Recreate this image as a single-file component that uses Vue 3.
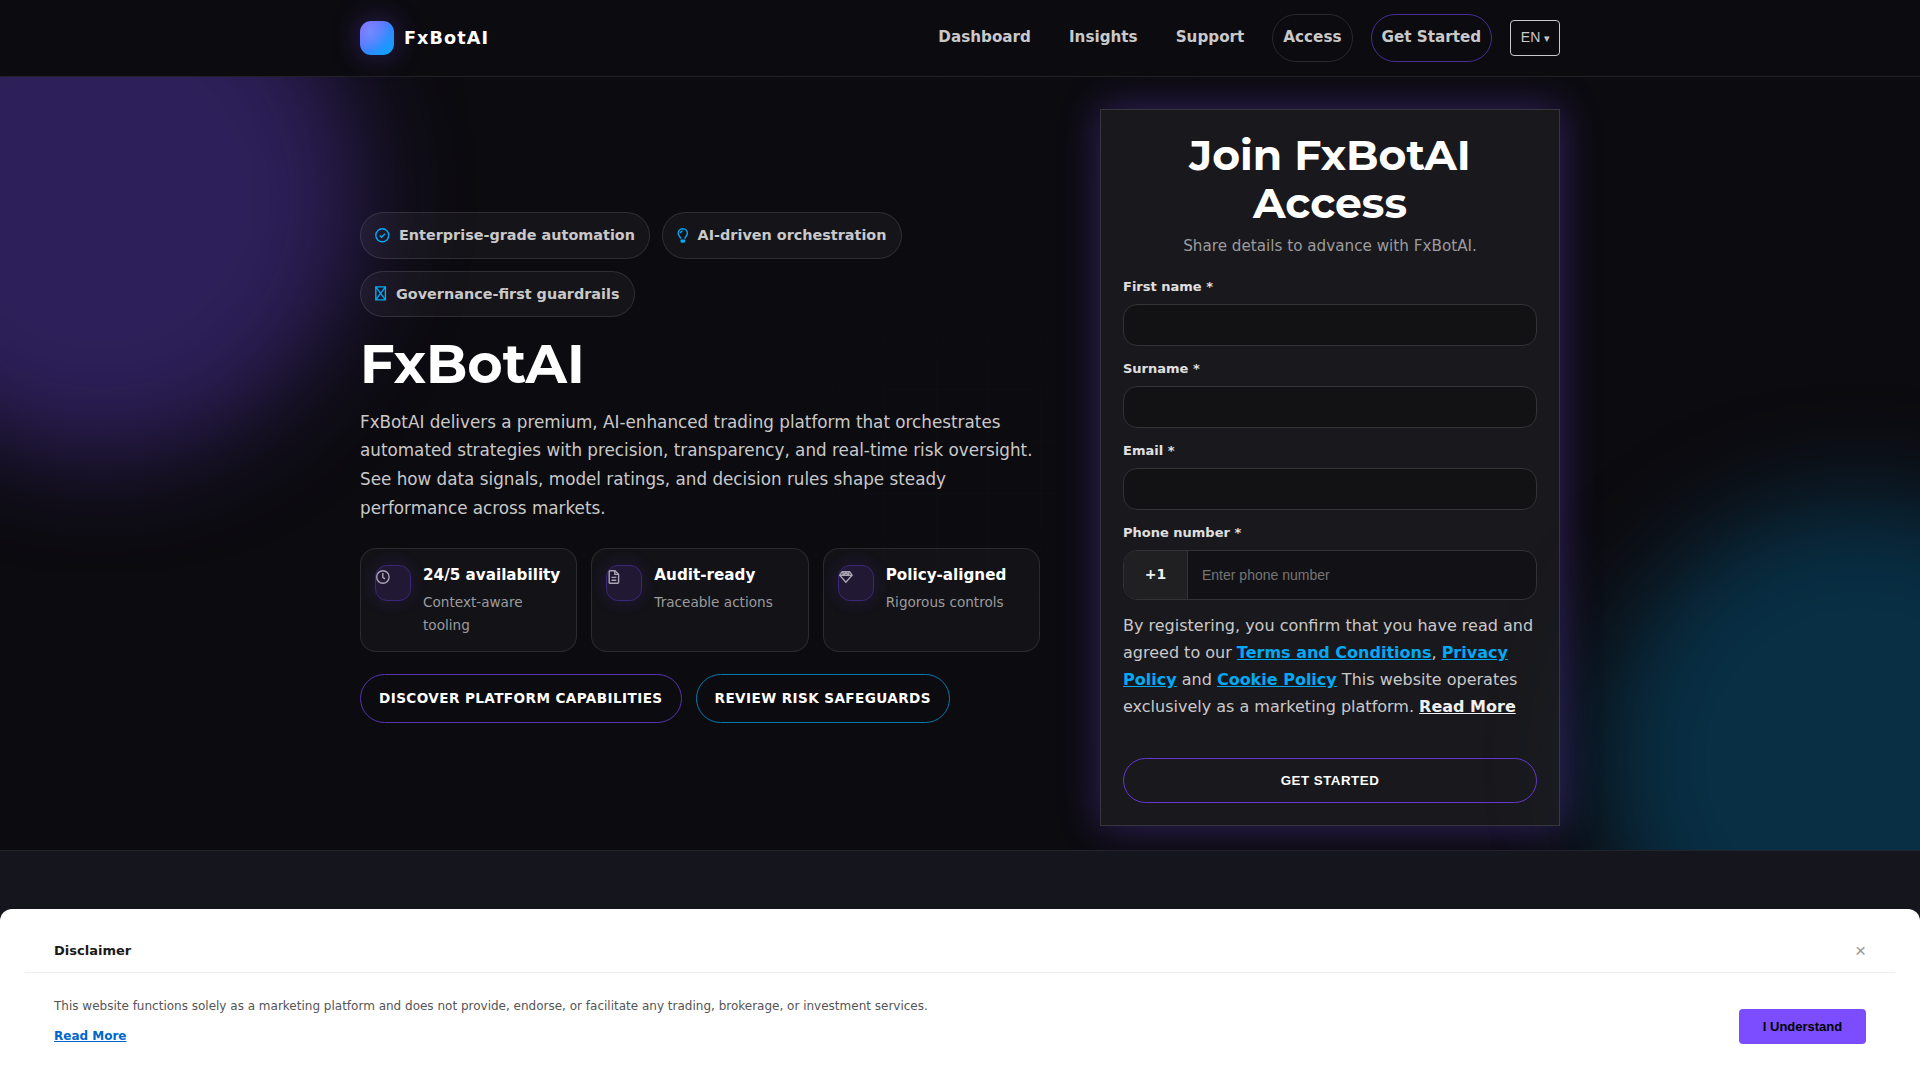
<script setup>
import { ref } from 'vue';

const navLinks = ['Dashboard', 'Insights', 'Support'];

const badges = [
  { icon: 'check', text: 'Enterprise-grade automation' },
  { icon: 'bulb', text: 'AI-driven orchestration' },
  { icon: 'box', text: 'Governance-first guardrails' },
];

const cards = [
  { icon: 'clock', title: '24/5 availability', text: 'Context-aware tooling' },
  { icon: 'file', title: 'Audit-ready', text: 'Traceable actions' },
  { icon: 'gem', title: 'Policy-aligned', text: 'Rigorous controls' },
];

const fields = ref([
  { id: 'first', label: 'First name *', value: '' },
  { id: 'last', label: 'Surname *', value: '' },
  { id: 'email', label: 'Email *', value: '' },
]);
const phone = ref('');
const showDisclaimer = ref(true);
</script>

<template>
  <div class="page">
    <header class="header">
      <div class="container header-row">
        <a class="brand"><span class="logo"></span><span>FxBotAI</span></a>
        <nav class="nav">
          <a v-for="link in navLinks" :key="link" class="nav-link">{{ link }}</a>
          <a class="nav-link outlined">Access</a>
          <a class="nav-link outlined primary">Get Started</a>
          <button class="lang">EN <span class="caret">▾</span></button>
        </nav>
      </div>
    </header>

    <section class="hero">
      <div class="blob purple"></div>
      <div class="blob teal"></div>
      <div class="grid-lines"></div>

      <div class="container hero-row">
        <div class="intro">
          <div class="badges">
            <span v-for="badge in badges" :key="badge.text" class="badge">
              <svg v-if="badge.icon === 'check'" width="15" height="15" viewBox="0 0 15 15">
                <circle cx="7.3" cy="7.3" r="6.5" />
                <path d="M4.7 7.4l1.9 1.9 3.4-3.6" />
              </svg>
              <svg v-else-if="badge.icon === 'bulb'" width="11.6" height="15" viewBox="0 0 11.6 15">
                <path d="M3.7 10.6C3.5 8.8 1.2 7.8 1.2 5.2a4.6 4.5 0 0 1 9.2 0c0 2.6-2.3 3.6-2.5 5.4" />
                <path d="M3.5 5.1a2.2 2.2 0 0 1 2.2-2" />
                <path class="solid" d="M3.5 11.4h4.6v1.8a1.6 1.6 0 0 1-1.6 1.6H5.1a1.6 1.6 0 0 1-1.6-1.6z" />
              </svg>
              <svg v-else width="12" height="15" viewBox="0 0 12 15">
                <path d="M.8.9h9.6v13H.8zM.8.9l9.6 13M10.4.9L.8 13.9" />
              </svg>
              {{ badge.text }}
            </span>
          </div>

          <h1>FxBotAI</h1>
          <p class="lead">
            FxBotAI delivers a premium, AI-enhanced trading platform that orchestrates automated
            strategies with precision, transparency, and real-time risk oversight. See how data
            signals, model ratings, and decision rules shape steady performance across markets.
          </p>

          <div class="cards">
            <div v-for="card in cards" :key="card.title" class="card">
              <span class="card-icon">
                <svg v-if="card.icon === 'clock'" width="14" height="14" viewBox="0 0 14 14">
                  <circle cx="6.9" cy="7" r="6.2" />
                  <path d="M6.8 3v4.3L9 8.8" />
                </svg>
                <svg v-else-if="card.icon === 'file'" width="14" height="14" viewBox="0 0 14 14">
                  <path d="M3.2.7h4.8l3.6 3.5v8.1a1 1 0 0 1-1 1H3.2a1 1 0 0 1-1-1V1.7a1 1 0 0 1 1-1z" />
                  <path d="M7.8.9v3.5h3.6M4.5 7.4h4.8M4.5 10.3h4.8" />
                </svg>
                <svg v-else width="14" height="14" viewBox="0 0 14 14">
                  <path d="M3.2 1.7h7.4l2.5 3.5-6.2 7L.7 5.2z" />
                  <path d="M.8 5.3h12.2M3.6 2l1.1 3.1L6.9 2l2.2 3.1L10.2 2" />
                </svg>
              </span>
              <div>
                <div class="card-title">{{ card.title }}</div>
                <div class="card-text">{{ card.text }}</div>
              </div>
            </div>
          </div>

          <div class="actions">
            <a class="action">Discover platform capabilities</a>
            <a class="action blue">Review risk safeguards</a>
          </div>
        </div>

        <form class="form" @submit.prevent>
          <h2>Join FxBotAI Access</h2>
          <p class="form-sub">Share details to advance with FxBotAI.</p>

          <div v-for="field in fields" :key="field.id" class="field">
            <label :for="field.id">{{ field.label }}</label>
            <input :id="field.id" v-model="field.value" class="input" type="text" />
          </div>
          <div class="field">
            <label for="phone">Phone number *</label>
            <div class="phone">
              <span class="prefix">+1</span>
              <input id="phone" v-model="phone" type="tel" placeholder="Enter phone number" />
            </div>
          </div>

          <p class="terms">
            By registering, you confirm that you have read and agreed to our
            <a>Terms and Conditions</a>, <a>Privacy Policy</a> and <a>Cookie Policy</a>
            This website operates exclusively as a marketing platform.
            <a class="more">Read More</a>
          </p>
          <button class="submit">GET STARTED</button>
        </form>
      </div>
    </section>

    <section class="next"></section>

    <div v-if="showDisclaimer" class="disclaimer">
      <div class="disclaimer-head">
        <span>Disclaimer</span>
        <button class="close" @click="showDisclaimer = false">×</button>
      </div>
      <div class="disclaimer-body">
        <div>
          <p>This website functions solely as a marketing platform and does not provide, endorse, or facilitate any trading, brokerage, or investment services.</p>
          <a>Read More</a>
        </div>
        <button class="understand" @click="showDisclaimer = false">I Understand</button>
      </div>
    </div>
  </div>
</template>

<style>
body {
  background: #0c0b10;
}
</style>

<style scoped>
* {
  box-sizing: border-box;
}

.page {
  position: relative;
  height: 1080px;
  overflow: hidden;
  display: flex;
  flex-direction: column;
  background: #0c0b10;
  color: #c9c9c9;
  font-family: "DejaVu Sans", sans-serif;
  font-size: 16px;
  line-height: 1.7;
}

p, h1, h2 {
  margin: 0;
}

.container {
  width: 1200px;
  margin: 0 auto;
}

/* header */
.header {
  position: relative;
  z-index: 2;
  height: 77px;
  flex: none;
  background: #0c0b10;
  border-bottom: 1px solid #222126;
}
.header-row {
  height: 76px;
  display: flex;
  align-items: center;
  justify-content: space-between;
}
.brand {
  display: flex;
  align-items: center;
  gap: 10px;
  color: #fff;
  font-size: 17.6px;
  font-weight: 700;
  letter-spacing: 1.1px;
}
.brand span:last-child {
  padding-top: 1px;
}
.logo {
  width: 34px;
  height: 34px;
  border-radius: 11px;
  background:
    radial-gradient(circle at 30% 30%, rgba(124, 145, 255, 0.75), transparent 60%),
    linear-gradient(135deg, #8f5cff, #2f8aff 60%, #06a8ff);
  box-shadow: 0 0 28px rgba(124, 77, 255, 0.35);
}
.nav {
  display: flex;
  align-items: center;
  gap: 18px;
}
.nav-link {
  padding: 10px;
  font-size: 15.2px;
  font-weight: 700;
}
.outlined {
  border: 1px solid #29282d;
  border-radius: 24px;
}
.primary {
  border-color: #472d94;
}
.lang {
  width: 50px;
  height: 36px;
  margin-left: -0.2px;
  padding: 0 0 2px 1px;
  background: none;
  border: 1px solid #c9c9c9;
  border-radius: 4px;
  color: #c9c9c9;
  font: 14px "Liberation Sans", sans-serif;
}
.caret {
  font-size: 10.5px;
}

/* hero */
.hero {
  position: relative;
  height: 773px;
  flex: none;
  overflow: hidden;
}
.blob {
  position: absolute;
  width: 520px;
  height: 520px;
  border-radius: 50%;
  filter: blur(50px);
}
.purple {
  left: -160px;
  top: -140px;
  background: #2d1f59;
}
.teal {
  right: -200px;
  bottom: -170px;
  background: #082f44;
}
.grid-lines {
  position: absolute;
  inset: 0;
  background-image:
    linear-gradient(rgba(255, 255, 255, 0.012) 1px, transparent 1px),
    linear-gradient(90deg, rgba(255, 255, 255, 0.012) 1px, transparent 1px);
  background-size: 52px 52px;
  mask-image: radial-gradient(circle at 50% 50%, #000 0%, transparent 60%);
}
.hero-row {
  position: relative;
  height: 100%;
  padding-top: 32px;
  display: flex;
  justify-content: space-between;
  align-items: flex-start;
}
.intro {
  width: 680px;
  padding-top: 103px;
}
.badges {
  display: flex;
  flex-wrap: wrap;
  gap: 12px;
}
.badge {
  height: 46.5px;
  padding: 0 14px;
  display: flex;
  align-items: center;
  gap: 9px;
  border: 1px solid rgba(255, 255, 255, 0.11);
  border-radius: 24px;
  background: rgba(255, 255, 255, 0.04);
  font-size: 14.4px;
  font-weight: 700;
}
svg {
  fill: none;
  stroke: currentColor;
  stroke-width: 1.4;
}
.badge svg {
  color: #03a9f4;
}
.badge .solid {
  fill: currentColor;
  stroke: none;
}
h1, h2 {
  color: #fff;
  font-family: Montserrat, "Inter", sans-serif;
  font-weight: 700;
  line-height: 1.1;
}
h1 {
  margin-top: 18px;
  font-size: 54.1px;
}
.lead {
  margin-top: 13px;
  font-size: 16.8px;
  line-height: 28.7px;
}
.cards {
  margin-top: 26px;
  display: grid;
  grid-template-columns: repeat(3, 1fr);
  gap: 14px;
}
.card {
  height: 104px;
  padding: 14px;
  display: flex;
  gap: 12px;
  border: 1px solid rgba(255, 255, 255, 0.1);
  border-radius: 16px;
  background: rgba(255, 255, 255, 0.03);
}
.card-icon {
  width: 36px;
  height: 36px;
  margin-top: 2px;
  flex: none;
  display: flex;
  padding-top: 4px;
  border: 1px solid #3b2778;
  border-radius: 12px;
  background: #211834;
  box-shadow: 0 0 18px rgba(124, 77, 255, 0.16);
  color: #aaa6b2;
}
.card-title {
  color: #fff;
  font-size: 15.2px;
  font-weight: 700;
}
.card-text {
  margin-top: 2px;
  color: #9c9c9e;
  font-size: 13.6px;
}
.actions {
  margin-top: 22px;
  display: flex;
  gap: 14px;
}
.action {
  height: 49px;
  padding: 0 18px;
  display: flex;
  align-items: center;
  border: 1px solid #5634b0;
  border-radius: 25px;
  color: #fff;
  font-size: 13.6px;
  font-weight: 700;
  letter-spacing: 0.4px;
  text-transform: uppercase;
}
.blue {
  border-color: #0779af;
}

/* form */
.form {
  width: 460px;
  height: 717px;
  padding: 21px 22px 22px;
  display: flex;
  flex-direction: column;
  border: 1px solid rgba(255, 255, 255, 0.13);
  background: linear-gradient(rgba(255, 255, 255, 0.055), rgba(255, 255, 255, 0.055)), rgba(12, 11, 16, 0.5);
  box-shadow: 0 0 36px rgba(124, 77, 255, 0.35);
}
h2 {
  padding: 0 40px;
  font-size: 42.5px;
  line-height: 48px;
  text-align: center;
}
.form-sub {
  margin-top: 7px;
  margin-bottom: 16px;
  color: #9c9c9e;
  font-size: 15.2px;
  text-align: center;
}
.field {
  margin-bottom: 12px;
}
.field label {
  display: block;
  height: 28px;
  line-height: 22px;
  color: #e0e0e0;
  font-size: 13px;
  font-weight: 700;
}
.field .input {
  display: block;
  width: 100%;
  height: 42px;
  border: 1px solid #333336;
  border-radius: 14px;
  background: #121215;
}
.phone {
  height: 50px;
  display: flex;
  overflow: hidden;
  border: 1px solid #333336;
  border-radius: 14px;
  background: #121116;
}
.prefix {
  width: 64px;
  display: flex;
  align-items: center;
  justify-content: center;
  border-right: 1px solid #333336;
  background: #202022;
  color: #f0f0f0;
  font-size: 14px;
  font-weight: 700;
}
.phone input {
  flex: 1;
  padding: 0 14px;
  border: none;
  background: none;
  font: 14px "Liberation Sans", sans-serif;
}
.phone input::placeholder {
  color: #757575;
}
.terms a {
  color: #03a9f4;
  font-weight: 700;
  text-decoration: underline;
}
.terms .more {
  color: #f0f0f0;
}
.submit {
  height: 45px;
  margin-top: auto;
  flex: none;
  border: 1px solid #6338cc;
  border-radius: 23px;
  background: none;
  color: #fff;
  font: 700 13.33px "Liberation Sans", sans-serif;
  letter-spacing: 0.5px;
}

.next {
  flex: 1;
  border-top: 1px solid #23232b;
  background: #15151e;
}

/* disclaimer sheet over the page */
.disclaimer {
  position: absolute;
  z-index: 3;
  left: 0;
  right: 0;
  bottom: 0;
  height: 171px;
  padding: 0 25px;
  border-radius: 12px 12px 0 0;
  background: #fff;
}
.disclaimer-head {
  height: 64px;
  padding: 20px 29px 0;
  display: flex;
  align-items: center;
  justify-content: space-between;
  border-bottom: 1px solid #eee;
  color: #1a1a1a;
  font-size: 13px;
  font-weight: 700;
}
.disclaimer-head span {
  padding-top: 2px;
}
.close {
  padding: 0;
  border: none;
  background: none;
  color: #999;
  font: 19px "Liberation Sans", sans-serif;
}
.disclaimer-body {
  padding: 23px 29px 0;
  display: flex;
  justify-content: space-between;
  font-size: 12px;
}
.disclaimer-body p {
  color: #555;
}
.disclaimer-body a {
  display: inline-block;
  margin-top: 10px;
  color: #0066cc;
  font-weight: 700;
  text-decoration: underline;
}
.understand {
  width: 127px;
  height: 35px;
  margin-top: 13px;
  border: none;
  border-radius: 4px;
  background: #7c4dff;
  color: #000;
  font: 700 13px "Liberation Sans", sans-serif;
}
</style>
